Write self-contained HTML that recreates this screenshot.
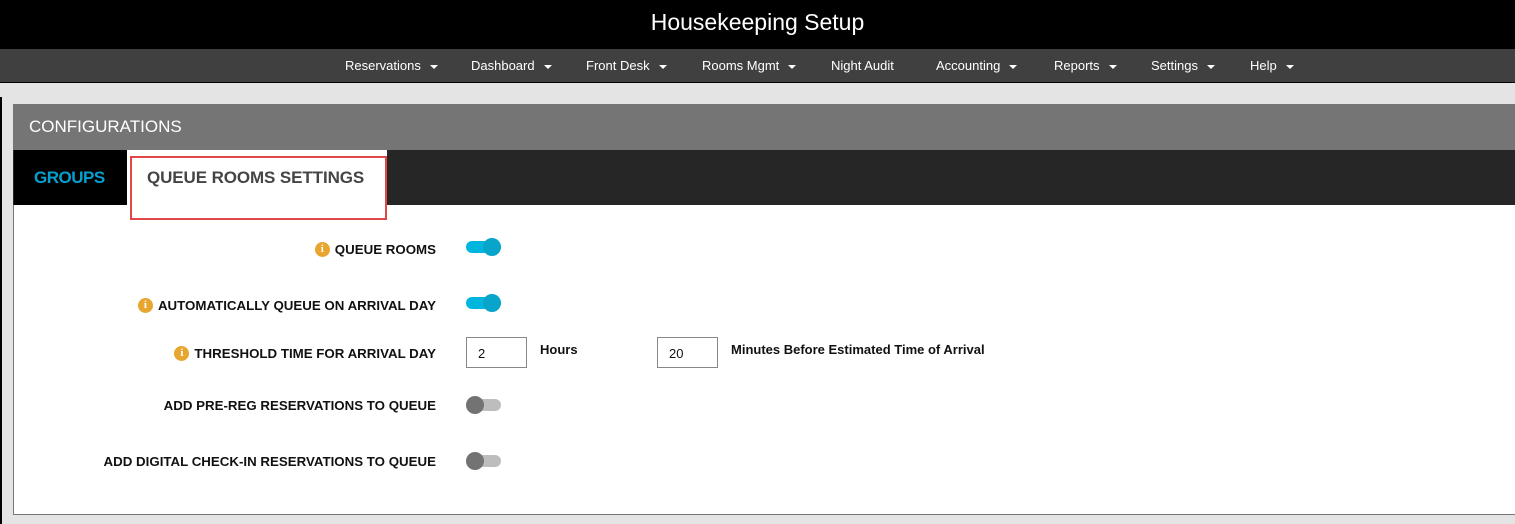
<!DOCTYPE html>
<html><head><meta charset="utf-8"><style>
*{margin:0;padding:0;box-sizing:border-box}
body{width:1515px;height:524px;overflow:hidden;background:#e4e4e4;font-family:"Liberation Sans",sans-serif;position:relative}
.a{position:absolute;white-space:nowrap}
.nav{font-size:13px;color:#fff;top:58px}
.car{display:inline-block;width:0;height:0;border-left:4px solid transparent;border-right:4px solid transparent;border-top:4px solid #fff;margin-left:9px;vertical-align:middle}
.lbl{font-size:13.3px;font-weight:bold;color:#111;right:1079px;display:flex;align-items:center;height:16px}
.i{display:inline-block;width:15px;height:15px;border-radius:50%;background:#e8a630;color:#fff;font-size:11px;text-align:center;line-height:15px;font-weight:bold;margin-right:5px;font-family:"Liberation Serif",serif}
.ton{position:absolute;left:466px;width:35px;height:12px;border-radius:6px;background:#00b6de}
.ton::after{content:"";position:absolute;right:0;top:-3px;width:18px;height:18px;border-radius:50%;background:#08a4ca}
.tof{position:absolute;left:466px;width:35px;height:12px;border-radius:6px;background:#bdbdbd}
.tof::after{content:"";position:absolute;left:0;top:-3px;width:18px;height:18px;border-radius:50%;background:#737373}
.inp{position:absolute;top:337px;width:61px;height:31px;border:1px solid #888;background:#fff;font-size:13px;padding:8px 0 0 11px;color:#111}
.txt{font-size:13px;font-weight:bold;color:#111;top:342px}
</style></head><body>
<div class="a" style="left:0;top:0;width:1515px;height:49px;background:#000"></div>
<div class="a" style="left:0;top:9px;width:1515px;text-align:center;color:#fff;font-size:23px">Housekeeping Setup</div>
<div class="a" style="left:0;top:49px;width:1515px;height:34px;background:#404040;border-bottom:1px solid #000"></div>
<div class="a nav" style="left:345px">Reservations<span class="car"></span></div>
<div class="a nav" style="left:471px">Dashboard<span class="car"></span></div>
<div class="a nav" style="left:586px">Front Desk<span class="car"></span></div>
<div class="a nav" style="left:702px">Rooms Mgmt<span class="car"></span></div>
<div class="a nav" style="left:831px">Night Audit</div>
<div class="a nav" style="left:936px">Accounting<span class="car"></span></div>
<div class="a nav" style="left:1054px">Reports<span class="car"></span></div>
<div class="a nav" style="left:1151px">Settings<span class="car"></span></div>
<div class="a nav" style="left:1250px">Help<span class="car"></span></div>
<div class="a" style="left:0;top:97px;width:2px;height:427px;background:#000"></div>
<div class="a" style="left:13px;top:104px;width:1503px;height:411px;background:#fff;border:1px solid #777"></div>
<div class="a" style="left:13px;top:104px;width:1502px;height:46px;background:#757575"></div>
<div class="a" style="left:29px;top:117px;color:#fff;font-size:17px">CONFIGURATIONS</div>
<div class="a" style="left:13px;top:150px;width:1502px;height:55px;background:#262626"></div>
<div class="a" style="left:14px;top:150px;width:113px;height:55px;background:#000"></div>
<div class="a" style="left:34px;top:168px;color:#05a0d0;font-size:17px;font-weight:bold;letter-spacing:-0.5px">GROUPS</div>
<div class="a" style="left:127px;top:150px;width:260px;height:55px;background:#fff"></div>
<div class="a" style="left:130px;top:156px;width:257px;height:64px;border:2px solid #e04848"></div>
<div class="a" style="left:147px;top:168px;color:#444;font-size:17px;font-weight:bold;letter-spacing:-0.1px">QUEUE ROOMS SETTINGS</div>

<div class="a lbl" style="top:241px"><span class="i">i</span>QUEUE ROOMS</div>
<div class="ton" style="top:241px"></div>
<div class="a lbl" style="top:297px"><span class="i">i</span>AUTOMATICALLY QUEUE ON ARRIVAL DAY</div>
<div class="ton" style="top:297px"></div>
<div class="a lbl" style="top:345px"><span class="i">i</span>THRESHOLD TIME FOR ARRIVAL DAY</div>
<div class="inp" style="left:466px">2</div>
<div class="a txt" style="left:540px">Hours</div>
<div class="inp" style="left:657px">20</div>
<div class="a txt" style="left:731px">Minutes Before Estimated Time of Arrival</div>
<div class="a lbl" style="top:397px">ADD PRE-REG RESERVATIONS TO QUEUE</div>
<div class="tof" style="top:399px"></div>
<div class="a lbl" style="top:453px">ADD DIGITAL CHECK-IN RESERVATIONS TO QUEUE</div>
<div class="tof" style="top:455px"></div>
</body></html>
